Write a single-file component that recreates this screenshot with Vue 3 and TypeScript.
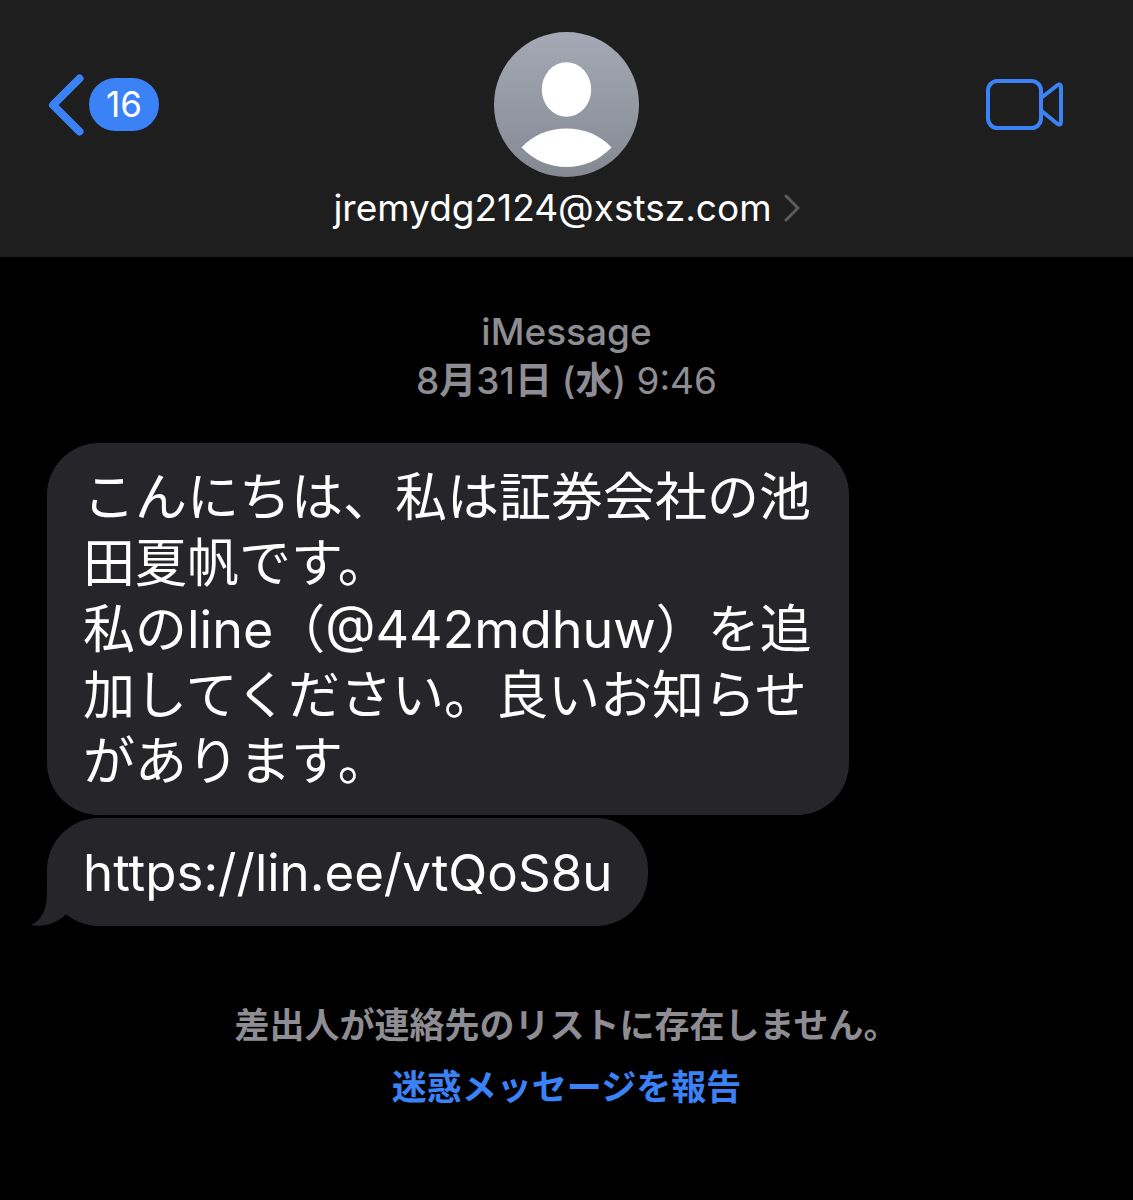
<script setup lang="ts">
interface Message {
  id: number
  text: string
  href?: string
}

interface Run {
  text: string
  latin: boolean
}

const unread = 16
const sender = 'jremydg2124@xstsz.com'
const date = '8月31日 (水)'

const messages: Message[] = [
  {
    id: 1,
    text: 'こんにちは、私は証券会社の池田夏帆です。\n私のline（@442mdhuw）を追加してください。良いお知らせがあります。',
  },
  { id: 2, text: 'https://lin.ee/vtQoS8u', href: 'https://lin.ee/vtQoS8u' },
]

// Latin and Japanese parts of the date carry different weights, so it is split.
function runs(text: string): Run[] {
  return text
    .split(/([ -~]+)/)
    .filter((part) => part !== '')
    .map((part) => ({ text: part, latin: /^[ -~]/.test(part) }))
}
</script>

<template>
  <div class="screen">
    <header class="header">
      <div class="bar">
        <button class="back" type="button" aria-label="戻る">
          <svg class="back-icon" viewBox="0 0 36 62" aria-hidden="true">
            <path d="M31.5 4.5 L5 31 L31.5 57.5" />
          </svg>
          <span class="badge">{{ unread }}</span>
        </button>
        <svg class="avatar" viewBox="0 0 145 145" aria-hidden="true">
          <defs>
            <linearGradient id="avatar-fill" x1="0" y1="0" x2="0" y2="1">
              <stop offset="0" stop-color="#a5a9b5" />
              <stop offset="1" stop-color="#858992" />
            </linearGradient>
          </defs>
          <circle cx="72.5" cy="72.5" r="72.5" fill="url(#avatar-fill)" />
          <ellipse cx="72.5" cy="57.5" rx="24.7" ry="27.2" fill="#fff" />
          <path
            d="M27.5 115.5 C39 103 55 96.5 72.5 96.5 C90 96.5 106 103 117.5 115.5 C105 128.5 89 135 72.5 135 C56 135 40 128.5 27.5 115.5 Z"
            fill="#fff"
          />
        </svg>
        <button class="video" type="button" aria-label="FaceTimeビデオ">
          <svg class="video-icon" viewBox="0 0 78 52" aria-hidden="true">
            <rect x="2" y="2" width="53" height="47" rx="9.5" />
            <path d="M55 19 L71 6.5 Q75 4 75 8 V43 Q75 47 71 44.5 L55 31.5" />
          </svg>
        </button>
      </div>
      <button class="contact" type="button">
        <span>{{ sender }}</span>
        <svg class="chevron" viewBox="0 0 16 28" aria-hidden="true">
          <path d="M2 2 L14 14 L2 26" />
        </svg>
      </button>
    </header>

    <main class="thread">
      <div class="stamp">
        <div class="service">iMessage</div>
        <time datetime="08-31T09:46">
          <b><span v-for="(run, r) in runs(date)" :key="r" :class="{ latin: run.latin }">{{ run.text }}</span></b>
          9:46
        </time>
      </div>

      <div class="messages">
        <div v-for="(message, i) in messages" :key="message.id" class="bubble">
          <a v-if="message.href" class="link" :href="message.href">{{ message.text }}</a>
          <template v-else>{{ message.text }}</template>
          <svg
            v-if="i === messages.length - 1"
            class="tail"
            viewBox="0 0 40 50"
            aria-hidden="true"
          >
            <path d="M16 0 V14 C16 30 13 43 0 49 C14 52 28 46 35 38 L40 0 Z" />
          </svg>
        </div>
      </div>

      <footer class="notice">
        <p class="notice-text">差出人が連絡先のリストに存在しません。</p>
        <button class="report" type="button">迷惑メッセージを報告</button>
      </footer>
    </main>
  </div>
</template>

<style>
body {
  background: #000;
}
</style>

<style scoped>
.screen {
  min-height: 100vh;
  background: #000;
  color: #fff;
  font-family: Inter, 'Noto Sans CJK JP', sans-serif;
}

button {
  padding: 0;
  border: 0;
  background: none;
  color: inherit;
  font: inherit;
  cursor: pointer;
}

svg {
  display: block;
  fill: none;
  stroke-linecap: round;
  stroke-linejoin: round;
}

.header {
  display: flex;
  flex-direction: column;
  align-items: center;
  box-sizing: border-box;
  min-height: 257px;
  padding-top: 32px;
  background: #1e1e1e;
}

.bar {
  display: grid;
  grid-template-columns: 1fr auto 1fr;
  align-items: center;
  box-sizing: border-box;
  width: 100%;
  padding: 0 48px;
}

.back {
  display: flex;
  align-items: center;
  justify-self: start;
  gap: 5px;
}

.back-icon {
  width: 36px;
  height: 62px;
  stroke: #3b82f7;
  stroke-width: 8;
}

.badge {
  box-sizing: border-box;
  min-width: 70px;
  padding: 0 16px;
  border-radius: 27px;
  background: #3b82f7;
  font-size: 35px;
  line-height: 53px;
  text-align: center;
}

.avatar {
  width: 145px;
  height: 145px;
}

.video {
  justify-self: end;
  margin-right: 21px;
}

.video-icon {
  width: 78px;
  height: 52px;
  stroke: #3b82f7;
  stroke-width: 4;
}

.contact {
  display: flex;
  align-items: center;
  gap: 12px;
  margin-top: 8px;
  font-size: 37px;
  line-height: 46px;
}

.chevron {
  width: 16px;
  height: 28px;
  stroke: #5b5b5f;
  stroke-width: 3;
}

.thread {
  display: flex;
  flex-direction: column;
  padding: 50px 47px 0;
}

.stamp {
  color: #8d8d93;
  font-size: 37px;
  line-height: 49px;
  text-align: center;
}

.stamp b {
  font-weight: 600;
}

.service,
.stamp .latin {
  font-weight: 500;
}

.messages {
  display: flex;
  flex-direction: column;
  align-items: flex-start;
  gap: 3px;
  margin-top: 38px;
}

.bubble {
  position: relative;
  box-sizing: border-box;
  max-width: 802px;
  padding: 22px 36px 20px;
  border-radius: 52px;
  background: #26252a;
  font-size: 52px;
  line-height: 66px;
  white-space: pre-line;
}

.link {
  display: block;
  color: inherit;
  font-size: 51px;
  text-decoration: none;
}

.tail {
  position: absolute;
  bottom: 0;
  left: -16px;
  width: 40px;
  height: 50px;
  fill: #26252a;
}

.notice {
  display: flex;
  flex-direction: column;
  align-items: center;
  margin-top: 74px;
  font-size: 35px;
  font-weight: 600;
  line-height: 50px;
}

.notice-text {
  margin: 0;
  color: #8d8d93;
}

.report {
  margin-top: 12px;
  color: #3b82f7;
}
</style>
